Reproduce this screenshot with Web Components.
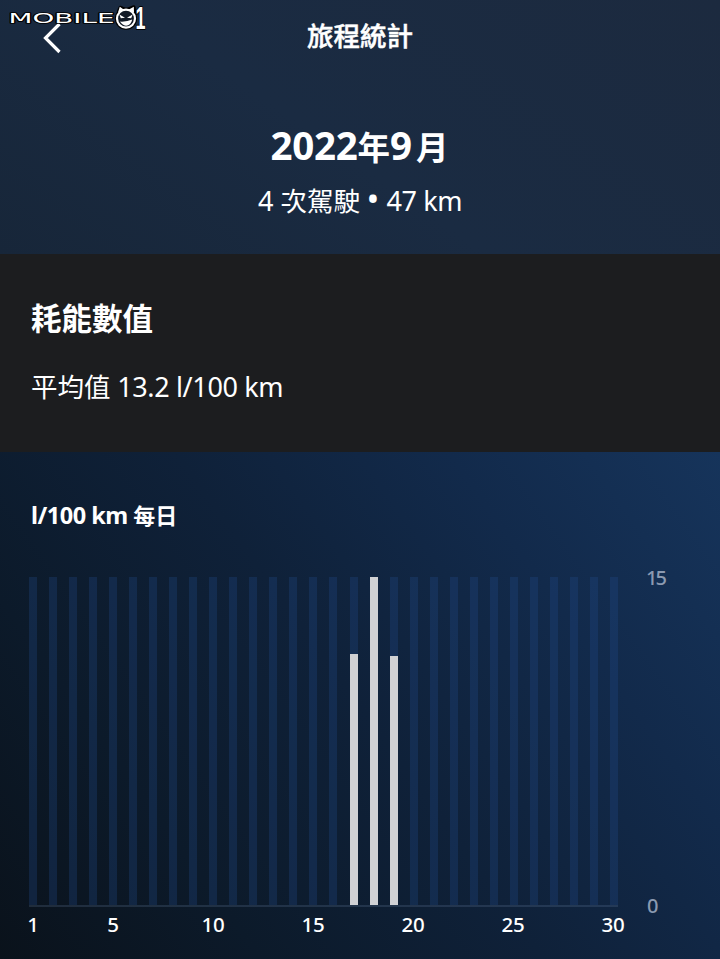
<!DOCTYPE html>
<html lang="zh-Hant">
<head>
<meta charset="utf-8">
<title>旅程統計</title>
<style>
body {
    margin: 0;
    background: #0d1a2b;
    color: #fff;
    font-family: "Noto Sans", "Noto Sans CJK TC", sans-serif;
}
</style>
</head>
<body>
<trip-screen>
    <trip-header slot="header">
        <span slot="title">旅程統計</span>
        <span slot="month"><latin-text style="--size: 38.5px; --space: -0.3px">2022</latin-text>年<latin-text style="--size: 38.5px; --space: 4px">9</latin-text>月</span>
        <span slot="summary"><latin-text style="--size: 27px">4 </latin-text>次駕駛<latin-text style="--size: 27px; --space: -0.4px"> <latin-text style="--size: 34px; --space: 0.5px">•</latin-text> 47 km</latin-text></span>
    </trip-header>
    <consumption-card slot="card">
        <span slot="heading">耗能數值</span>
        <span slot="value">平均值<latin-text style="--size: 27px; --space: -0.35px"> 13.2 l/100 km</latin-text></span>
    </consumption-card>
    <daily-chart max="15" days="30" values="17:11.5,18:15,19:11.4">
        <latin-text style="--size: 23.5px; --space: -0.5px">l/100 km </latin-text>每日
    </daily-chart>
</trip-screen>

<script>
class latinText extends HTMLElement{
    constructor(){
        super();
        // no whitespace around the slot, it would be kept by white-space : pre
        this.attachShadow({mode :'open'}).innerHTML = '<style>' +
            ':host { display : inline; font-size : var(--size); letter-spacing : var(--space, 0); line-height : 1; }' +
            'slot { white-space : pre; }' +
            '</style><slot></slot>';
    }
}

class brandMark extends HTMLElement{
    constructor(){
        super();
        this.attachShadow({mode :'open'}).innerHTML = `
        <style>
        :host { display : block; width : 160px; height : 34px; }
        svg { display : block; }
        text {
            font-family : "DejaVu Sans", sans-serif;
            fill : #fff;
            stroke : #000;
            stroke-width : 1.6px;
            paint-order : stroke;
            stroke-linejoin : round;
        }
        .one { font-family : "Liberation Sans", sans-serif; font-weight : 700; stroke-width : 2px; }
        </style>
        <svg width="160" height="34" viewBox="0 0 160 34">
            <text x="8.5" y="23.2" font-size="14" textLength="106" lengthAdjust="spacingAndGlyphs">MOBILE</text>
            <g stroke-linecap="round" stroke-linejoin="round">
                <g fill="none" stroke="#000" stroke-width="4.4">
                    <circle cx="126" cy="18.6" r="9"/>
                    <path d="M119 11.5 L120.5 8 L124 9.5 M128.5 9.5 L133.5 7.5 L134 12"/>
                </g>
                <circle cx="126" cy="18.6" r="9" fill="#111a26" stroke="#fff" stroke-width="2.2"/>
                <path d="M118 12.5 L119.8 6.8 L124 9.8 Z M128.5 9.8 L133.8 6.8 L134 12.5 Z" fill="#fff"/>
                <path d="M119.4 14.5 L125 17.8 L120.8 18.2 Z M132.6 14.5 L127 17.8 L131.2 18.2 Z" fill="#fff"/>
                <path d="M120 21.6 Q127 22 132.2 19.6 Q131 25.6 126 25.7 Q122 25.2 120 21.6 Z" fill="#fff"/>
            </g>
            <text class="one" x="135.5" y="28.5" font-size="32" textLength="10" lengthAdjust="spacingAndGlyphs">1</text>
        </svg>`;
    }
}

class tripScreen extends HTMLElement{
    constructor(){
        super();
        this.attachShadow({mode :'open'}).innerHTML = `
        <style>
        :host {
            display : grid;
            grid-template-rows : 254px 198px 507px;
            position : relative;
            width : 720px;
            height : 959px;
            overflow : hidden;
        }
        brand-mark { position : absolute; left : 0; top : 0; }
        </style>
        <slot name="header"></slot>
        <slot name="card"></slot>
        <slot></slot>
        <brand-mark></brand-mark>`;
    }
}

class tripHeader extends HTMLElement{
    constructor(){
        super();
        this.attachShadow({mode :'open'}).innerHTML = `
        <style>
        :host {
            display : block;
            background : linear-gradient(35deg, #172639 0%, #1a2b42 45%, #1c2a3f 100%);
            text-align : center;
        }
        .bar {
            display : grid;
            grid-template-columns : 70px 1fr 70px;
            align-items : center;
            height : 74px;
        }
        .bar svg { margin : 2px 0 0 40px; }
        .title { font-size : 26.5px; font-weight : 500; line-height : 72px; height : 74px; -webkit-text-stroke : 0.5px #fff; }
        .month { margin-top : 43px; font-size : 32.5px; font-weight : 700; line-height : 62px; height : 62px; padding-right : 1px; }
        .summary { margin-top : -1px; font-size : 26.5px; line-height : 46px; height : 46px; }
        </style>
        <div class="bar">
            <svg width="24" height="32" viewBox="0 0 24 32" fill="none" stroke="#fff" stroke-width="3.2">
                <path d="M19.5 2 L5.5 16 L19.5 30"/>
            </svg>
            <div class="title"><slot name="title"></slot></div>
        </div>
        <div class="month"><slot name="month"></slot></div>
        <div class="summary"><slot name="summary"></slot></div>`;
    }
}

class consumptionCard extends HTMLElement{
    constructor(){
        super();
        this.attachShadow({mode :'open'}).innerHTML = `
        <style>
        :host {
            display : block;
            box-sizing : border-box;
            padding : 40px 31px 0;
            background : #1c1d1f;
        }
        .heading { font-size : 30.5px; font-weight : 700; line-height : 48px; height : 48px; }
        .value { margin-top : 21px; font-size : 26.5px; line-height : 48px; height : 48px; }
        </style>
        <div class="heading"><slot name="heading"></slot></div>
        <div class="value"><slot name="value"></slot></div>`;
    }
}

class dailyChart extends HTMLElement{
    constructor(){
        super();
        this.shadow = this.attachShadow({mode :'open'});
    }

    connectedCallback(){
        var max = parseFloat(this.getAttribute('max'));
        var days = parseInt(this.getAttribute('days'), 10);
        var values = {};
        this.getAttribute('values').split(',').forEach(function(pair){
            var parts = pair.split(':');
            values[parts[0]] = parseFloat(parts[1]);
        });

        var bars = '';
        var labels = '';
        for (var day = 1; day <= days; day++){
            var fill = values[day] ? `<i style="height:${values[day] / max * 100}%"></i>` : '';
            bars += `<div class="bar">${fill}</div>`;
            labels += `<div class="tick">${day === 1 || day % 5 === 0 ? `<span>${day}</span>` : ''}</div>`;
        }

        this.shadow.innerHTML = `
        <style>
        :host {
            display : block;
            box-sizing : border-box;
            padding : 40px 0 0 29px;
            background : linear-gradient(54deg, #0a121b 0%, #0c1a2a 24%, #0f2139 50%, #122a4b 75%, #16345b 100%);
        }
        .caption {
            padding-left : 2px;
            font-size : 22px;
            font-weight : 700;
            line-height : 46px;
            height : 46px;
            margin-bottom : 39px;
        }
        .plot { display : grid; grid-template-columns : 589px 80px; }
        .bars {
            display : flex;
            justify-content : space-between;
            height : 328px;
            border-bottom : 2px solid rgba(120, 145, 180, 0.2);
        }
        .bar {
            display : flex;
            align-items : flex-end;
            width : 8px;
            background : rgba(34, 76, 140, 0.29);
        }
        .bar i { width : 8px; background : #d0d1d4; }
        .scale {
            display : flex;
            flex-direction : column;
            justify-content : space-between;
            margin : -13px 0 -13px;
            padding-left : 28px;
            color : #8b9ab1;
            font-size : 20px;
            font-weight : 500;
            letter-spacing : -2px;
            line-height : 28px;
        }
        .scale span:last-child { padding-left : 1px; }
        .ticks {
            display : flex;
            justify-content : space-between;
            width : 588px;
            margin-top : 2px;
            font-size : 20.5px;
            font-weight : 500;
            letter-spacing : -0.2px;
            line-height : 30px;
        }
        .tick { display : flex; justify-content : center; width : 8px; }
        </style>
        <div class="caption"><slot></slot></div>
        <div class="plot">
            <div class="bars">${bars}</div>
            <div class="scale"><span>${max}</span><span>0</span></div>
        </div>
        <div class="ticks">${labels}</div>`;
    }
}

customElements.define('latin-text', latinText);
customElements.define('brand-mark', brandMark);
customElements.define('trip-screen', tripScreen);
customElements.define('trip-header', tripHeader);
customElements.define('consumption-card', consumptionCard);
customElements.define('daily-chart', dailyChart);
</script>
</body>
</html>
